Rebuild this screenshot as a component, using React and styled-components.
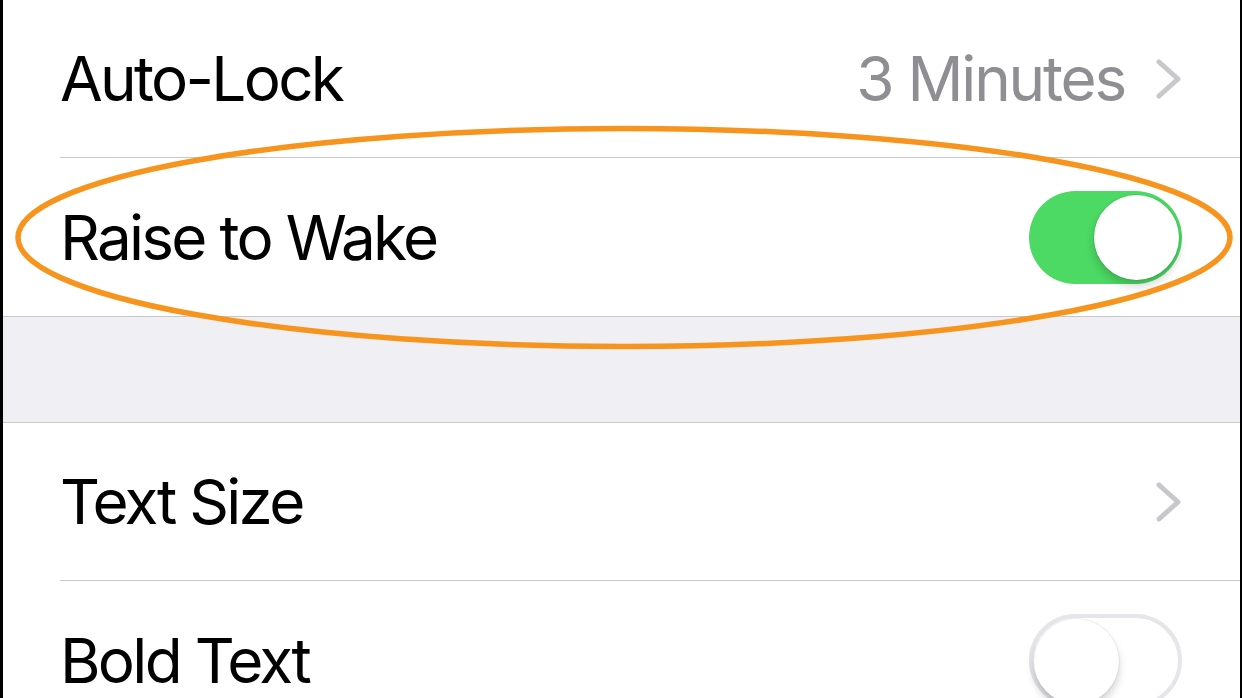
import styled, { createGlobalStyle } from "styled-components";

const GlobalStyle = createGlobalStyle`
  html, body {
    margin: 0;
    padding: 0;
    background: #000;
  }
  body {
    font-family: Inter, "Noto Sans", "Liberation Sans", sans-serif;
    -webkit-font-smoothing: antialiased;
  }
`;

const Screen = styled.div`
  position: relative;
  width: 1237px;
  height: 698px;
  margin-left: 3px;
  background: #efeff4;
  overflow: hidden;
`;

const Group = styled.div`
  background: #fff;
  border-top: ${(p) => (p.$top ? "1px solid #c8c7cc" : "none")};
  border-bottom: ${(p) => (p.$bottom ? "1px solid #c8c7cc" : "none")};
`;

const Spacer = styled.div`
  height: 105px;
`;

const Cell = styled.div`
  display: flex;
  padding-left: 57px;
`;

const CellBody = styled.div`
  flex: 1;
  display: flex;
  align-items: center;
  height: ${(p) => p.$h || 157}px;
  padding-right: 58px;
  border-bottom: ${(p) => (p.$last ? "none" : "1px solid #c8c7cc")};
`;

const Label = styled.span`
  flex: 1;
  font-size: 62px;
  color: #000;
  letter-spacing: -2.7px;
`;

const Detail = styled.span`
  font-size: 62px;
  color: #8e8e93;
  letter-spacing: -2.2px;
  margin-right: 31px;
`;

const Chevron = styled.svg`
  width: 26px;
  height: 40px;
  display: block;
`;

const Track = styled.div`
  position: relative;
  width: 153px;
  height: 93px;
  border-radius: 47px;
  box-sizing: border-box;
  background: ${(p) => (p.$on ? "#4cd964" : "#fff")};
  border: ${(p) => (p.$on ? "none" : "4px solid #e5e5ea")};
`;

const Knob = styled.div`
  position: absolute;
  top: ${(p) => (p.$on ? 4 : 1)}px;
  ${(p) => (p.$on ? "right: 3px;" : "left: 1px;")}
  width: 85px;
  height: 85px;
  border-radius: 50%;
  background: #fff;
  box-shadow: 0 6px 8px rgba(0, 0, 0, 0.18), 0 0 0 1px rgba(0, 0, 0, 0.05);
`;

const Highlight = styled.svg`
  position: absolute;
  left: -3px;
  top: 0;
  width: 1242px;
  height: 698px;
  pointer-events: none;
`;

const ChevronIcon = () => (
  <Chevron viewBox="0 0 26 40">
    <path
      d="M3 3 L22 20 L3 37"
      fill="none"
      stroke="#c7c7cc"
      strokeWidth="5"
      strokeLinecap="round"
      strokeLinejoin="round"
    />
  </Chevron>
);

const Toggle = ({ on }) => (
  <Track $on={on}>
    <Knob $on={on} />
  </Track>
);

const App = () => {
  return (
    <>
      <GlobalStyle />
      <Screen>
        <Group $bottom>
          <Cell>
            <CellBody>
              <Label>Auto-Lock</Label>
              <Detail>3 Minutes</Detail>
              <ChevronIcon />
            </CellBody>
          </Cell>
          <Cell>
            <CellBody $last $h={158}>
              <Label>Raise to Wake</Label>
              <Toggle on />
            </CellBody>
          </Cell>
        </Group>
        <Spacer />
        <Group $top>
          <Cell>
            <CellBody>
              <Label>Text Size</Label>
              <ChevronIcon />
            </CellBody>
          </Cell>
          <Cell>
            <CellBody $last $h={158}>
              <Label>Bold Text</Label>
              <Toggle />
            </CellBody>
          </Cell>
        </Group>
        <Highlight viewBox="0 0 1242 698">
          <ellipse
            cx="624"
            cy="237.5"
            rx="606"
            ry="109"
            fill="none"
            stroke="#f7941d"
            strokeWidth="5.5"
          />
        </Highlight>
      </Screen>
    </>
  );
};

export default App;
